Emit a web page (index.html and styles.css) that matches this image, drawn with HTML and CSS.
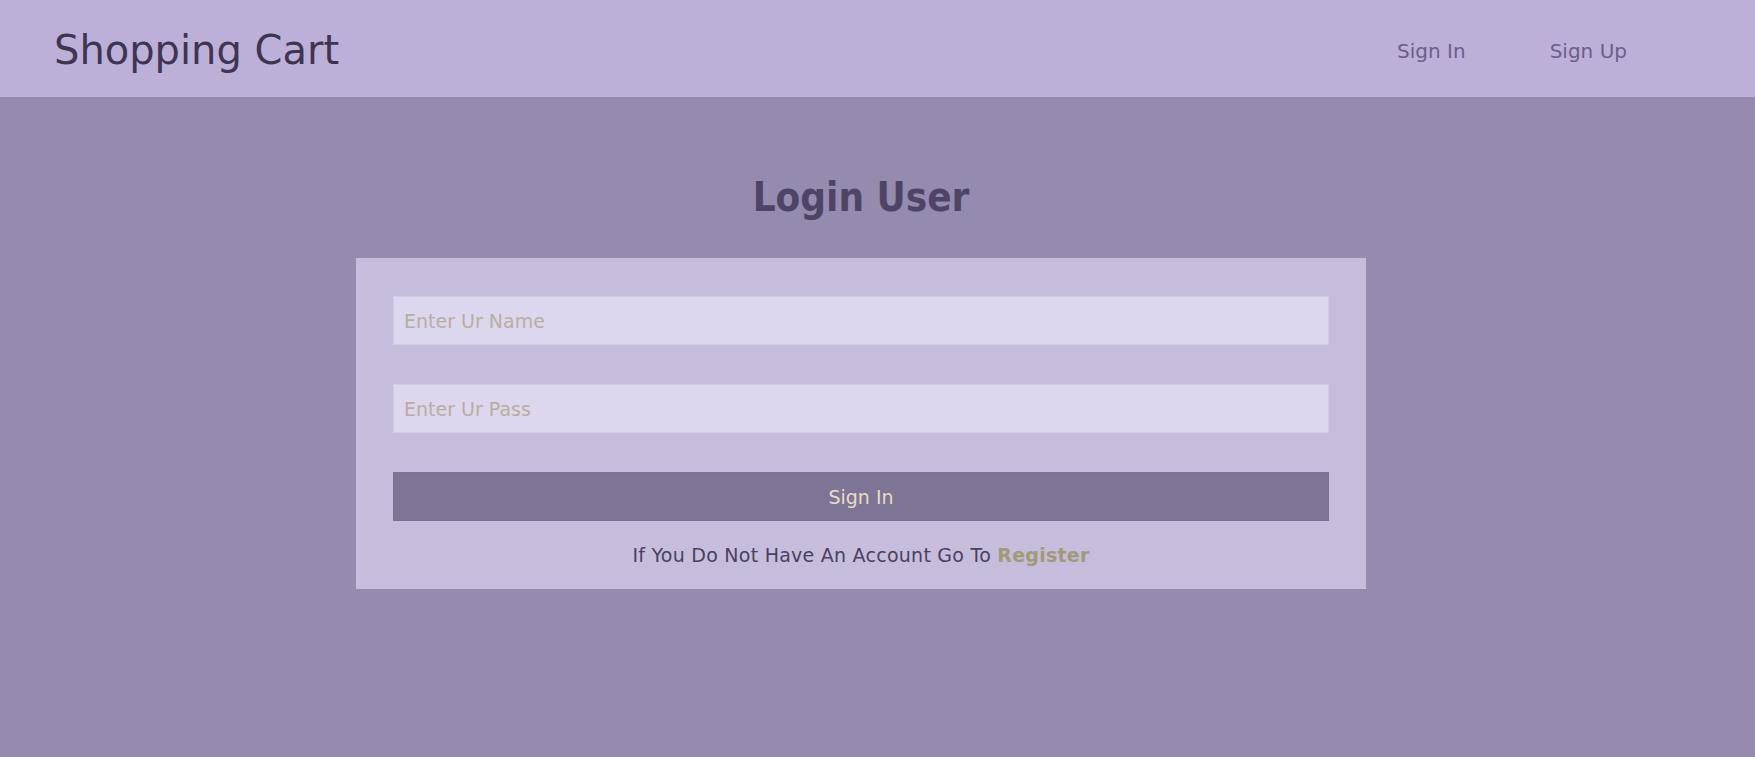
FILE: index.html
```html
<!DOCTYPE html>
<html lang="en">
<head>
<meta charset="utf-8">
<title>Shopping Cart</title>
<link rel="stylesheet" href="styles.css">
</head>
<body>
<header class="topbar">
  <div class="brand">Shopping Cart</div>
  <nav class="nav">
    <a class="nav-link" href="#">Sign In</a>
    <a class="nav-link" href="#">Sign Up</a>
  </nav>
</header>
<main class="main">
  <h1 class="title">Login User</h1>
  <form class="card">
    <input class="field" type="text" placeholder="Enter Ur Name">
    <input class="field" type="password" placeholder="Enter Ur Pass">
    <button class="submit" type="button">Sign In</button>
    <p class="note">If You Do Not Have An Account Go To <a class="register" href="#">Register</a></p>
  </form>
</main>
</body>
</html>
```
FILE: styles.css
```css
* { box-sizing: border-box; }
html, body { margin: 0; padding: 0; }
body {
  background: #958bae;
  font-family: "DejaVu Sans", Verdana, sans-serif;
  min-height: 757px;
}
.topbar {
  height: 97px;
  background: #bcb0d9;
  display: flex;
  align-items: center;
  justify-content: space-between;
  padding: 0 128px 0 54px;
}
.brand {
  font-size: 40px;
  color: #3e3552;
  line-height: 48px;
  padding-top: 2px;
}
.nav {
  display: flex;
  gap: 84px;
  padding-top: 4px;
}
.nav-link {
  font-size: 20px;
  color: #6a5f86;
  text-decoration: none;
}
.main {
  padding-right: 33px;
}
.title {
  margin: 76px 0 37px;
  text-align: center;
  font-family: "DejaVu Sans Condensed", "DejaVu Sans", sans-serif;
  font-stretch: condensed;
  font-weight: bold;
  font-size: 40px;
  line-height: 48px;
  color: #4e4466;
}
.card {
  width: 1010px;
  margin: 0 auto;
  background: #c6bddc;
  padding: 38px 37px 23px;
  display: flex;
  flex-direction: column;
}
.field {
  height: 49px;
  margin: 0 0 39px;
  border: 1px solid #d3cbe6;
  background: #ddd6ef;
  padding: 0 10px;
  font-family: "DejaVu Sans", sans-serif;
  font-size: 19px;
  color: #4d4366;
  outline: none;
}
.field::placeholder { color: #b7ae9f; }
.submit {
  height: 49px;
  margin: 0;
  border: 1px solid #7a7193;
  background: #7e7596;
  color: #e6dcc4;
  font-family: "DejaVu Sans", sans-serif;
  font-size: 19px;
  padding: 0;
}
.note {
  margin: 23px 0 0;
  text-align: center;
  font-size: 19px;
  letter-spacing: 0.25px;
  line-height: 22px;
  color: #4a4160;
}
.register {
  color: #a09a78;
  font-weight: bold;
  text-decoration: none;
}
```
